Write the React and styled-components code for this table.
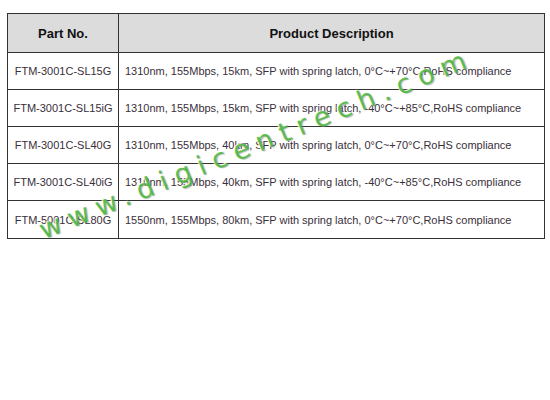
import React from 'react';
import styled, { createGlobalStyle } from 'styled-components';

const GlobalStyle = createGlobalStyle`
  body {
    margin: 0;
    background: #fff;
    font-family: Arial, "Liberation Sans", sans-serif;
  }
`;

const Page = styled.div`
  position: relative;
  width: 550px;
  height: 400px;
  padding: 13px 0 0 7px;
  box-sizing: border-box;
  overflow: hidden;
`;

const Table = styled.div`
  display: grid;
  grid-template-columns: 110px minmax(0, 1fr);
  grid-template-rows: 39px repeat(5, 37px);
  width: 538px;
  border: 1px solid #333;
  box-sizing: border-box;
`;

const HeadCell = styled.div`
  display: flex;
  align-items: center;
  justify-content: center;
  background: #dcdcdc;
  font-family: "Liberation Sans", Arial, sans-serif;
  font-weight: bold;
  font-size: 13px;
  color: #111;
  border-bottom: 1px solid #333;
  border-left: ${p => (p.$first ? 'none' : '1px solid #333')};
`;

const Cell = styled.div`
  display: flex;
  align-items: center;
  justify-content: ${p => (p.$center ? 'center' : 'flex-start')};
  padding: ${p => (p.$center ? '0' : '0 0 0 6px')};
  font-family: "Liberation Sans", Arial, sans-serif;
  font-size: 11px;
  color: #3a2f3a;
  white-space: nowrap;
  overflow: hidden;
  border-bottom: ${p => (p.$last ? 'none' : '1px solid #333')};
  border-left: ${p => (p.$center ? 'none' : '1px solid #333')};
`;

const Watermark = styled.div`
  position: absolute;
  left: 46px;
  top: 214px;
  transform: rotate(-22deg);
  transform-origin: left bottom;
  font-family: "DejaVu Sans", sans-serif;
  font-size: 27px;
  letter-spacing: 8px;
  color: rgba(70, 185, 55, 0.85);
  text-shadow: 1px 1px 1px rgba(120, 120, 120, 0.5), -1px -1px 1px rgba(255, 255, 255, 0.9);
  white-space: nowrap;
  pointer-events: none;
`;

const rows = [
  ['FTM-3001C-SL15G', '1310nm, 155Mbps, 15km, SFP with spring latch, 0°C~+70°C,RoHS compliance'],
  ['FTM-3001C-SL15iG', '1310nm, 155Mbps, 15km, SFP with spring latch, -40°C~+85°C,RoHS compliance'],
  ['FTM-3001C-SL40G', '1310nm, 155Mbps, 40km, SFP with spring latch, 0°C~+70°C,RoHS compliance'],
  ['FTM-3001C-SL40iG', '1310nm, 155Mbps, 40km, SFP with spring latch, -40°C~+85°C,RoHS compliance'],
  ['FTM-5001C-SL80G', '1550nm, 155Mbps, 80km, SFP with spring latch, 0°C~+70°C,RoHS compliance'],
];

export default function App() {
  return (
    <>
      <GlobalStyle />
      <Page>
        <Table>
          <HeadCell $first>Part No.</HeadCell>
          <HeadCell>Product Description</HeadCell>
          {rows.map(([part, desc], i) => (
            <React.Fragment key={part}>
              <Cell $center $last={i === rows.length - 1}>{part}</Cell>
              <Cell $last={i === rows.length - 1}>{desc}</Cell>
            </React.Fragment>
          ))}
        </Table>
        <Watermark>www.digicentrech.com</Watermark>
      </Page>
    </>
  );
}
